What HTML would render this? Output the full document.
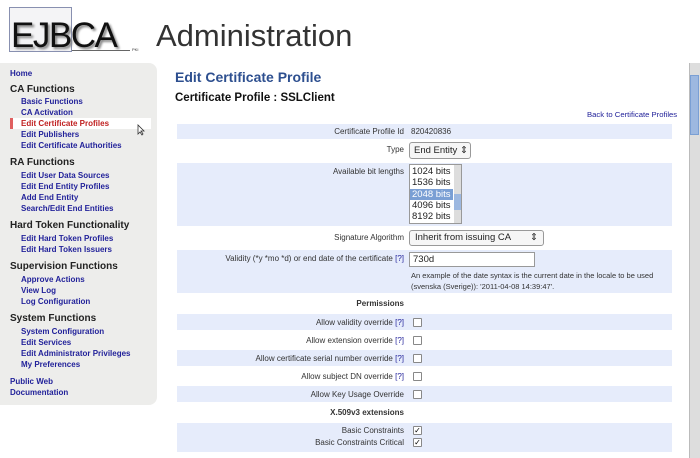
<!DOCTYPE html>
<html><head><meta charset="utf-8"><style>
*{margin:0;padding:0;box-sizing:border-box}
body{width:700px;height:458px;overflow:hidden;background:#fff;font-family:"Liberation Sans",sans-serif;position:relative}
.a{position:absolute;white-space:nowrap}
.logo{left:9px;top:7px;width:63px;height:45px;border:1px solid #8890b0;background:#f4f4f6}
.ej{left:11px;top:16px;font-size:35px;color:#111;letter-spacing:-1.5px;text-shadow:2px 2px 2px #888}
.adm{left:156px;top:18px;font-size:31px;color:#333}
.side{left:0;top:63px;width:157px;height:342px;background:#ededeb;border-radius:0 8px 8px 0}
.n{font-size:8px;font-weight:bold;color:#22229a}
.h{font-size:10px;font-weight:bold;color:#222}
.row{position:absolute;left:177px;width:495px;background:#e6ecfb}
.l{font-size:8px;color:#333;text-align:right;width:227px;left:177px}
.v{font-size:8px;color:#333;left:411px}
.q{color:#22229a}
.cb{width:9px;height:9px;border:1px solid #888;background:#fff;border-radius:1px}
</style></head><body>
<div class="a logo"></div>
<div class="a ej">EJBCA</div>
<div class="a" style="left:72px;top:50px;width:58px;border-top:1px solid #666"></div>
<div class="a" style="left:132px;top:47px;font-size:4px;color:#333">PKI</div>
<div class="a adm">Administration</div>

<div class="a side"></div>
<div class="a n" style="left:10px;top:69px">Home</div>
<div class="a h" style="left:10px;top:84px">CA Functions</div>
<div class="a n" style="left:21px;top:97px">Basic Functions</div>
<div class="a n" style="left:21px;top:108px">CA Activation</div>
<div class="a" style="left:10px;top:118px;width:141px;height:11px;background:#fff"></div>
<div class="a" style="left:10px;top:118px;width:3px;height:11px;background:#e06060"></div>
<div class="a n" style="left:21px;top:119px;color:#c02020">Edit Certificate Profiles</div>
<svg class="a" style="left:137px;top:124px" width="8" height="12" viewBox="0 0 8 12"><path d="M1 1 L1 10 L3 8 L5 11 L6 10 L4 7 L7 7 Z" fill="#fff" stroke="#333" stroke-width="0.8"/></svg>
<div class="a n" style="left:21px;top:130px">Edit Publishers</div>
<div class="a n" style="left:21px;top:141px">Edit Certificate Authorities</div>
<div class="a h" style="left:10px;top:157px">RA Functions</div>
<div class="a n" style="left:21px;top:171px">Edit User Data Sources</div>
<div class="a n" style="left:21px;top:182px">Edit End Entity Profiles</div>
<div class="a n" style="left:21px;top:193px">Add End Entity</div>
<div class="a n" style="left:21px;top:204px">Search/Edit End Entities</div>
<div class="a h" style="left:10px;top:220px">Hard Token Functionality</div>
<div class="a n" style="left:21px;top:234px">Edit Hard Token Profiles</div>
<div class="a n" style="left:21px;top:245px">Edit Hard Token Issuers</div>
<div class="a h" style="left:10px;top:261px">Supervision Functions</div>
<div class="a n" style="left:21px;top:275px">Approve Actions</div>
<div class="a n" style="left:21px;top:286px">View Log</div>
<div class="a n" style="left:21px;top:297px">Log Configuration</div>
<div class="a h" style="left:10px;top:313px">System Functions</div>
<div class="a n" style="left:21px;top:327px">System Configuration</div>
<div class="a n" style="left:21px;top:338px">Edit Services</div>
<div class="a n" style="left:21px;top:349px">Edit Administrator Privileges</div>
<div class="a n" style="left:21px;top:360px">My Preferences</div>
<div class="a n" style="left:10px;top:377px">Public Web</div>
<div class="a n" style="left:10px;top:388px">Documentation</div>

<div class="a" style="left:175px;top:69px;font-size:14px;font-weight:bold;color:#2d4f8f">Edit Certificate Profile</div>
<div class="a" style="left:175px;top:92px;font-size:11.5px;font-weight:bold;color:#111">Certificate Profile : SSLClient</div>
<div class="a n" style="left:587px;top:110px;font-weight:normal;font-size:7.7px">Back to Certificate Profiles</div>

<div class="row" style="top:124px;height:15px"></div>
<div class="a l" style="top:127px">Certificate Profile Id</div>
<div class="a v" style="top:127px">820420836</div>

<div class="a l" style="top:145px">Type</div>
<div class="a" style="left:409px;top:142px;width:62px;height:17px;border:1px solid #999;border-radius:3px;background:#f6f6f6;font-size:9.5px;padding:2px 4px;color:#222">End Entity ⇕</div>

<div class="row" style="top:163px;height:63px"></div>
<div class="a l" style="top:167px">Available bit lengths</div>
<div class="a" style="left:409px;top:164px;width:53px;height:60px;border:1px solid #999;background:#fff"></div>
<div class="a" style="left:454px;top:165px;width:7px;height:58px;background:#ddd"></div>
<div class="a" style="left:454px;top:194px;width:7px;height:16px;background:#9db8e0"></div>
<div class="a" style="left:410px;top:189px;width:43px;height:11px;background:#7a9fd4"></div>
<div class="a" style="left:412px;top:166px;font-size:9.5px;line-height:11.3px;color:#222">1024 bits<br>1536 bits<br><span style="color:#fff">2048 bits</span><br>4096 bits<br>8192 bits</div>

<div class="a l" style="top:233px">Signature Algorithm</div>
<div class="a" style="left:409px;top:230px;width:135px;height:16px;border:1px solid #999;border-radius:3px;background:#f6f6f6;font-size:9.5px;padding:1px 5px;color:#222">Inherit from issuing CA<span style="position:absolute;right:5px">⇕</span></div>

<div class="row" style="top:250px;height:43px"></div>
<div class="a l" style="top:254px">Validity (*y *mo *d) or end date of the certificate <span class="q">[?]</span></div>
<div class="a" style="left:409px;top:252px;width:126px;height:15px;border:1px solid #999;background:#fff;font-size:9.5px;padding:1px 3px;color:#222">730d</div>
<div class="a" style="left:411px;top:270px;font-size:7.5px;line-height:11px;color:#333">An example of the date syntax is the current date in the locale to be used<br>(svenska (Sverige)): '2011-04-08 14:39:47'.</div>

<div class="a l" style="top:299px;font-weight:bold">Permissions</div>
<div class="row" style="top:314px;height:16px"></div>
<div class="a l" style="top:318px">Allow validity override <span class="q">[?]</span></div>
<div class="a cb" style="left:413px;top:318px"></div>
<div class="a l" style="top:336px">Allow extension override <span class="q">[?]</span></div>
<div class="a cb" style="left:413px;top:336px"></div>
<div class="row" style="top:350px;height:16px"></div>
<div class="a l" style="top:354px">Allow certificate serial number override <span class="q">[?]</span></div>
<div class="a cb" style="left:413px;top:354px"></div>
<div class="a l" style="top:372px">Allow subject DN override <span class="q">[?]</span></div>
<div class="a cb" style="left:413px;top:372px"></div>
<div class="row" style="top:386px;height:16px"></div>
<div class="a l" style="top:390px">Allow Key Usage Override</div>
<div class="a cb" style="left:413px;top:390px"></div>

<div class="a l" style="top:408px;font-weight:bold">X.509v3 extensions</div>
<div class="row" style="top:423px;height:29px"></div>
<div class="a l" style="top:426px">Basic Constraints</div>
<div class="a cb" style="left:413px;top:426px;font-size:8px;line-height:7px;text-align:center">✓</div>
<div class="a l" style="top:438px">Basic Constraints Critical</div>
<div class="a cb" style="left:413px;top:438px;font-size:8px;line-height:7px;text-align:center">✓</div>

<div class="a" style="left:689px;top:63px;width:11px;height:395px;background:#ddd;border-left:1px solid #bbb"></div>
<div class="a" style="left:690px;top:75px;width:9px;height:60px;background:#9db8e0;border:1px solid #7a9fd4"></div>
</body></html>
